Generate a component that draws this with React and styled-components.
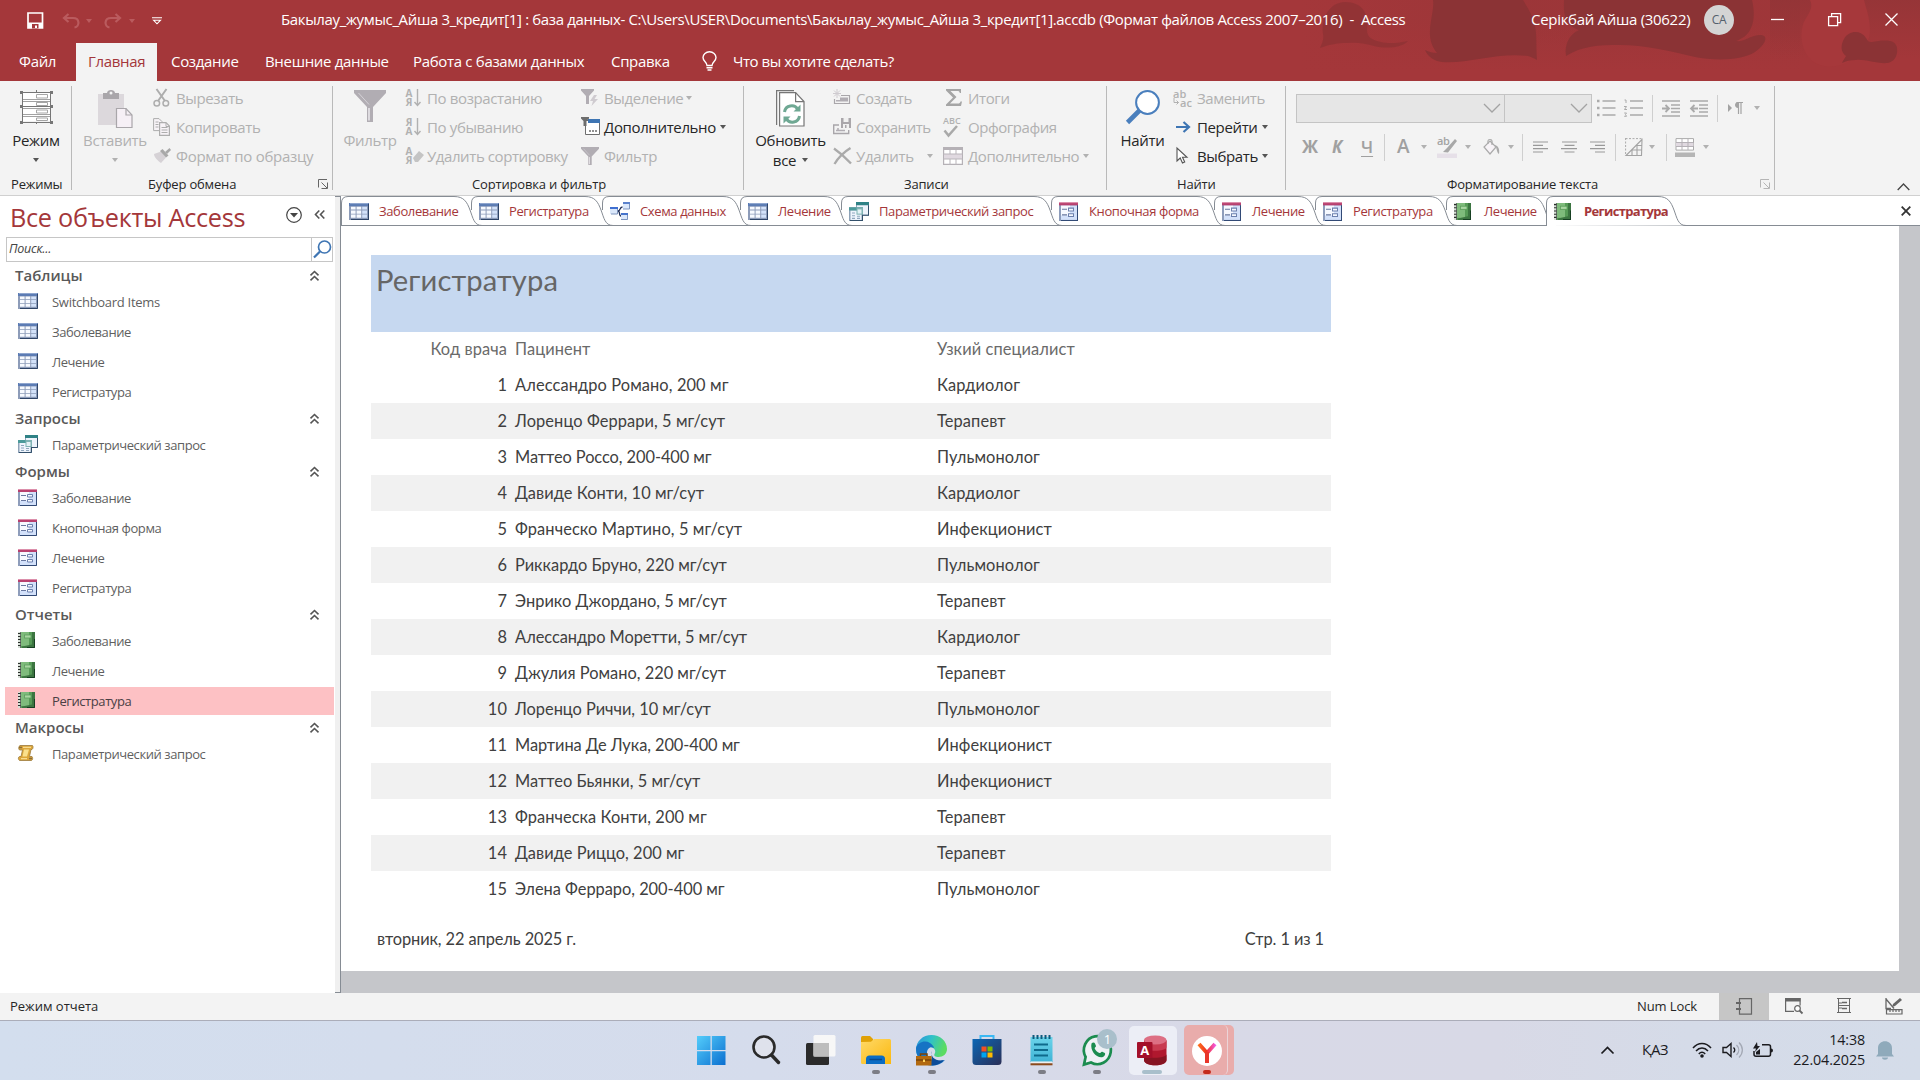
import React from "react";
import styled, { createGlobalStyle, css } from "styled-components";

const UI = `"Open Sans", "Noto Sans", sans-serif`;
const REPORT = `Lato, "Open Sans", sans-serif`;
const RED = "#a4373a";
const OFF = "#b1b1b1";
const INK = "#262626";

const Global = createGlobalStyle`
  * { box-sizing: border-box; }
  body { margin: 0; overflow: hidden; background: #fff; }
  svg { display: block; flex: none; overflow: visible; }
`;

const Window = styled.div`
  width: 1920px;
  height: 1080px;
  display: flex;
  flex-direction: column;
  font-family: ${UI};
  font-size: 15px;
  line-height: 20px;
  color: ${INK};
  white-space: nowrap;
`;
const Space = styled.div`
  width: ${(p) => p.$w}px;
  flex: none;
`;

/* ---------- title bar ---------- */
const Header = styled.header`
  position: relative;
  height: 81px;
  flex: none;
  background: ${RED};
  color: #fff;
  display: flex;
  flex-direction: column;
`;
const Art = styled.svg`
  position: absolute;
  right: 0;
  top: 0;
`;
const TitleBar = styled.div`
  position: relative;
  height: 43px;
  display: flex;
  align-items: center;
  padding-bottom: 4px;
`;
const QuickAccess = styled.div`
  width: 281px;
  display: flex;
  align-items: center;
  padding: 2px 0 0 27px;
`;
const Title = styled.div`
  width: 1250px;
  padding-bottom: 2px;
  letter-spacing: -0.356px;
`;
const User = styled.div`
  width: 173px;
  padding-bottom: 1px;
  letter-spacing: -0.3px;
`;
const Avatar = styled.div`
  width: 30px;
  height: 30px;
  border-radius: 50%;
  background: #d4d4d4;
  color: #54606c;
  font-size: 12px;
  line-height: 30px;
  text-align: center;
  letter-spacing: -0.3px;
`;
const Controls = styled.div`
  display: flex;
  align-items: center;
  gap: 44px;
  padding-left: 37px;
`;
const MenuTabs = styled.nav`
  position: relative;
  height: 38px;
  display: flex;
  align-items: stretch;
`;
const MenuTab = styled.div`
  width: ${(p) => p.$w}px;
  padding-left: ${(p) => p.$pad}px;
  padding-bottom: 2px;
  display: flex;
  align-items: center;
  letter-spacing: ${(p) => p.$ls ?? -0.32}px;
  ${(p) => p.$active && css`background: #f3f3f3; color: ${RED};`}
`;
const Tell = styled(MenuTab)`
  gap: 16px;
`;

/* ---------- ribbon ---------- */
const Ribbon = styled.section`
  height: 115px;
  flex: none;
  background: #f3f3f3;
  border-bottom: 1px solid #d0d0d0;
  display: flex;
  padding-top: 5px;
`;
const Group = styled.div`
  width: ${(p) => p.$w}px;
  height: 104px;
  border-right: 1px solid #b9b9b9;
  display: flex;
  flex-direction: column;
`;
const GroupBody = styled.div`
  height: 88px;
  flex: none;
  display: flex;
  padding-left: ${(p) => p.$pad}px;
`;
const GroupFoot = styled.div`
  display: flex;
  align-items: center;
  height: 20px;
  flex: none;
  padding-left: ${(p) => p.$pad}px;
  font-size: 13px;
  line-height: 16px;
  letter-spacing: -0.17px;
`;
const Launcher = styled.div`
  margin-left: auto;
  padding: 0 4px 1px 0;
`;
const Big = styled.div`
  width: ${(p) => p.$w}px;
  display: flex;
  flex-direction: column;
  align-items: center;
  color: ${(p) => (p.$off ? OFF : INK)};
  letter-spacing: -0.32px;
  padding-top: 4px;
`;
const BigIcon = styled.div`
  height: 40px;
`;
const BigLine = styled.div`
  height: 20px;
  display: flex;
  align-items: center;
  gap: 6px;
`;
const Column = styled.div`
  width: ${(p) => p.$w}px;
  margin-left: ${(p) => p.$ml || 0}px;
  margin-top: -3px;
  display: flex;
  flex-direction: column;
`;
const Cmd = styled.div`
  height: 29px;
  display: flex;
  align-items: center;
  color: ${(p) => (p.$off ? OFF : INK)};
  letter-spacing: ${(p) => p.$ls ?? -0.37}px;
`;
const CmdIcon = styled.div`
  width: ${(p) => p.$w || 23}px;
  height: 20px;
  display: flex;
  align-items: center;
`;
const Inset = styled.div`
  padding-left: 3px;
`;
const Caret = styled.i`
  border: 3.5px solid transparent;
  border-top: 4px solid ${(p) => p.$c || (p.$off ? OFF : "#555")};
  border-bottom: 0;
  margin-left: ${(p) => p.$ml ?? 4}px;
`;
const FormatArea = styled.div`
  padding-left: 10px;
  display: flex;
  flex-direction: column;
`;
const FormatRow = styled.div`
  display: flex;
  align-items: center;
  height: ${(p) => p.$h}px;
`;
const Combo = styled.div`
  width: ${(p) => p.$w}px;
  height: 29px;
  background: #e6e6e6;
  border: 1px solid #c4c4c4;
  margin-right: -1px;
  display: flex;
  align-items: center;
  justify-content: flex-end;
  padding-right: 3px;
`;
const Slot = styled.div`
  width: ${(p) => p.$w}px;
  display: flex;
  align-items: center;
`;
const Rule = styled.div`
  width: 1px;
  height: 27px;
  background: #cfcfcf;
  margin-right: ${(p) => p.$mr}px;
`;
const Glyph = styled.span`
  font-size: ${(p) => p.$s || 17}px;
  font-weight: ${(p) => (p.$light ? 600 : 700)};
  font-style: ${(p) => (p.$italic ? "italic" : "normal")};
  text-decoration: ${(p) => (p.$line ? "underline" : "none")};
  text-underline-offset: 3px;
  padding-bottom: ${(p) => p.$up || 0}px;
  color: #a0a0a0;
`;
const Collapse = styled.div`
  flex: 1;
  display: flex;
  align-items: flex-end;
  justify-content: flex-end;
  padding: 0 10px 4px 0;
`;
const SortLetters = styled.span`
  display: flex;
  flex-direction: column;
  width: 8px;
  font-size: 10px;
  line-height: 9px;
  font-weight: 700;
  letter-spacing: 0;
  text-align: center;
  color: #b1b1b1;
`;
const Stack = styled.div`
  display: flex;
  flex-direction: column;
`;
const Tiny = styled.span`
  font-size: ${(p) => p.$s || 9}px;
  line-height: 9px;
  font-weight: 600;
  letter-spacing: 0;
  color: #b1b1b1;
  width: 20px;
  text-align: ${(p) => (p.$end ? "right" : "left")};
`;

/* ---------- workspace ---------- */
const Workspace = styled.main`
  height: 797px;
  flex: none;
  display: flex;
`;
const NavPane = styled.aside`
  width: 335px;
  background: #fff;
  color: #5f5f5f;
  display: flex;
  flex-direction: column;
`;
const NavTitle = styled.div`
  height: 41px;
  display: flex;
  align-items: center;
  padding: 1px 0 0 10px;
  font-size: 25.3px;
  letter-spacing: -0.3px;
  color: ${RED};
`;
const NavButtons = styled.div`
  display: flex;
  gap: 12px;
  align-items: center;
  margin-left: auto;
  padding-right: 10px;
  margin-top: -5px;
`;
const Search = styled.div`
  width: 327px;
  height: 25px;
  margin: 0 0 2px 6px;
  border: 1px solid #c6c6c6;
  display: flex;
  font-size: 12.5px;
  line-height: 22px;
  font-style: italic;
  letter-spacing: -0.2px;
  padding-left: 2px;
  color: #444;
`;
const SearchButton = styled.div`
  width: 21px;
  margin-left: auto;
  border-left: 1px solid #c6c6c6;
  padding: 2px 0 0 1px;
`;
const NavHead = styled.div`
  height: 23px;
  padding: 0 15px 1px 15px;
  display: flex;
  align-items: center;
  justify-content: space-between;
  font-weight: 600;
  font-size: 15px;
  color: #595959;
`;
const NavItem = styled.div`
  height: 28px;
  margin: 1px 1px 1px 5px;
  padding: 0 0 1px 13px;
  display: flex;
  align-items: center;
  font-size: 13px;
  line-height: 18px;
  letter-spacing: ${(p) => p.$ls ?? -0.42}px;
  ${(p) => p.$active && css`background: #fdc1c4; color: #4a4044;`}
`;
const NavIcon = styled.div`
  width: 34px;
  padding-bottom: 1px;
`;
const Splitter = styled.div`
  width: 6px;
  background: #f0f0f0;
  border-right: 1px solid #868c94;
  border-top: 1px solid #868c94;
  border-bottom: 1px solid #868c94;
`;
const Content = styled.div`
  flex: 1;
  display: flex;
  flex-direction: column;
`;
const TabStrip = styled.div`
  height: 30px;
  flex: none;
  display: flex;
  border-bottom: 1px solid #868c94;
`;
const DocTab = styled.div`
  position: relative;
  width: ${(p) => p.$w}px;
  height: 30px;
  padding-left: 8px;
  display: flex;
  align-items: center;
  color: ${RED};
  font-size: 13px;
  line-height: 18px;
  font-weight: ${(p) => (p.$active ? 700 : 400)};
  letter-spacing: ${(p) => (p.$active ? -0.68 : -0.38)}px;
`;
const TabShape = styled.svg`
  position: absolute;
  left: 0;
  top: 0;
`;
const TabIcon = styled.div`
  position: relative;
  width: 30px;
`;
const TabText = styled.span`
  position: relative;
  padding-bottom: 1px;
`;
const CloseDoc = styled.div`
  margin-left: auto;
  padding: 10px 9px 0 0;
`;
const Canvas = styled.div`
  flex: 1;
  background: #c5c6ca;
  padding: 0 21px 22px 0;
`;
const Page = styled.article`
  height: 745px;
  background: #fff;
  padding: 29px 0 0 30px;
  font-family: ${REPORT};
  font-size: 16.4px;
  letter-spacing: 0.1px;
  color: #404040;
`;
const Band = styled.div`
  width: 960px;
  height: 77px;
  background: #c6d8f0;
  color: #666;
  padding: 7px 0 0 5px;
  font-size: 29.2px;
  line-height: 36px;
`;
const Row = styled.div`
  width: 960px;
  height: 36px;
  padding-bottom: 1px;
  display: grid;
  grid-template-columns: 136px 430px 1fr;
  align-items: center;
  background: ${(p) => (p.$alt ? "#f1f1f1" : "#fff")};
`;
const Num = styled.span`
  text-align: right;
`;
const Name = styled.span`
  padding-left: 8px;
  letter-spacing: ${(p) => p.$ls ?? 0.1}px;
`;
const HeadRow = styled(Row)`
  height: 35px;
  color: #6a6a6a;
  padding-bottom: 2px;
`;
const Foot = styled.footer`
  width: 960px;
  height: 64px;
  padding: 0 7px 0 6px;
  display: flex;
  justify-content: space-between;
  align-items: center;
  letter-spacing: ${(p) => p.$ls}px;
`;

/* ---------- status + taskbar ---------- */
const Status = styled.div`
  height: 28px;
  flex: none;
  background: #f3f3f3;
  border-bottom: 1px solid #abadb9;
  display: flex;
  align-items: center;
  padding: 0 1px 0 10px;
  font-size: 13px;
  line-height: 18px;
`;
const StatusText = styled.div`
  padding-bottom: 1px;
`;
const NumLock = styled(StatusText)`
  margin-left: auto;
  width: 82px;
  letter-spacing: -0.1px;
`;
const ViewButton = styled.div`
  width: 50px;
  height: 27px;
  padding-bottom: 1px;
  display: flex;
  align-items: center;
  justify-content: center;
  background: ${(p) => (p.$active ? "#c6c6c6" : "transparent")};
`;
const Taskbar = styled.div`
  height: 59px;
  flex: none;
  background: linear-gradient(90deg, #d3deee 0%, #d5dcec 40%, #d8d9e7 62%, #d8d9e6 78%, #d5dbe8 88%, #d4dce9 100%);
  display: flex;
`;
const Apps = styled.div`
  width: 1600px;
  padding-left: 683.5px;
  display: flex;
  flex: none;
`;
const AppButton = styled.div`
  position: relative;
  width: 55.15px;
  height: 59px;
  display: flex;
  justify-content: center;
  padding-top: 13px;
`;
const Dot = styled.i`
  position: absolute;
  left: 50%;
  top: 49px;
  width: ${(p) => p.$w || 8}px;
  height: 4px;
  margin-left: ${(p) => -(p.$w || 8) / 2}px;
  border-radius: 2px;
  background: ${(p) => p.$c || "#7c7d85"};
`;
const Tile = styled.i`
  position: absolute;
  left: ${(p) => p.$x}px;
  top: ${(p) => p.$y}px;
  width: ${(p) => p.$w}px;
  height: ${(p) => p.$h}px;
  border-radius: 5px;
  background: ${(p) => p.$c};
  ${(p) => p.$edge && css`border-right: 1px solid #ebd4d8;`}
`;
const Lift = styled.div`
  position: relative;
`;
const Badge = styled.span`
  position: absolute;
  left: 28px;
  top: 8px;
  width: 20px;
  height: 20px;
  border-radius: 50%;
  background: #a9bfcb;
  color: #fff;
  font-size: 13px;
  line-height: 20px;
  text-align: center;
`;
const Tray = styled.div`
  display: flex;
  align-items: center;
  flex: 1;
  color: #1b1b1f;
  padding-bottom: 1px;
`;
const Lang = styled.div`
  width: 50px;
  margin-left: 27px;
  letter-spacing: -0.4px;
  font-size: 14.5px;
`;
const Clock = styled.div`
  width: 92px;
  text-align: right;
  font-size: 14.3px;
  letter-spacing: -0.12px;
  padding-bottom: 1px;
`;

/* ---------- icons ---------- */
const Svg = ({ w, h, children, ...r }) => (
  <svg width={w} height={h} viewBox={`0 0 ${w} ${h}`} fill="none" {...r}>{children}</svg>
);

const TableIcon = ({ h = 16 }) => (
  <svg width="20" height={h} viewBox="0 0 20 16" preserveAspectRatio="none">
    <rect width="20" height="16" fill="#8d9cb9" />
    <rect width="20" height="3" fill="#5c7cb4" />
    <rect x="1" y="0" width="18" height="1" fill="#8fa6cf" />
    <path d="M2 3.6h4.6v2.6H2zM7.6 3.6h4.6v2.6H7.6zM2 7h4.6v3H2zM7.6 7h4.6v3H7.6zM2 10.8h4.6v3H2zM7.6 10.8h4.6v3H7.6z" fill="#f7faff" />
    <path d="M13.2 3.6h4.8v2.6h-4.8zM13.2 7h4.8v3h-4.8zM13.2 10.8h4.8v3h-4.8z" fill="#d3e2fa" />
    <path d="M19.5 1v14.500H2" stroke="#2f4568" fill="none" />
  </svg>
);
const FormIcon = ({ h = 17 }) => (
  <svg width="19" height={h} viewBox="0 0 19 17" preserveAspectRatio="none">
    <rect width="19" height="17" fill="#8e9dbb" />
    <rect x="2" y="3" width="16" height="13" fill="#d3e1fa" />
    <rect x="2" y="3" width="9" height="9" fill="#f6f9ff" />
    <rect width="19" height="3" fill="#b8406f" />
    <rect width="19" height="1" fill="#dc8fab" />
    <path d="M3 6.500h5M3 11.500h5" stroke="#6878a0" />
    <path d="M9.500 5.500h5v2.500h-5zM9.500 10.500h5v2.500h-5z" stroke="#6c80ad" fill="#f4f8ff" />
    <path d="M18.500 3v13.500H2" stroke="#324a76" fill="none" />
  </svg>
);
const ReportIcon = ({ h = 16 }) => (
  <svg width="17" height={h} viewBox="0 0 17 16" preserveAspectRatio="none">
    <rect width="17" height="16" fill="#569b57" />
    <rect x="3" width="8" height="14" fill="#7fbb7c" />
    <path d="M14 0h3v16H4v-1.500l10-2z" fill="#3c7541" />
    <path d="M16.500 7v8.500H9" fill="none" stroke="#173f22" />
    <rect x="6.500" y="3" width="6.500" height="3" fill="#a9d6a2" stroke="#5d9d5c" strokeWidth=".8" />
    <rect width="3" height="16" fill="#d8e0d8" />
    <path d="M0 1.500h3M0 4.500h3M0 7.500h3M0 10.500h3M0 13.500h3" stroke="#2b2f2c" />
    <path d="M2.500 0v16" stroke="#4a564c" strokeWidth=".8" />
  </svg>
);
const QueryIcon = ({ h = 18 }) => (
  <svg width="20" height={h} viewBox="0 0 20 18" preserveAspectRatio="none">
    <rect x="7" width="13" height="13" fill="#8fa3b8" />
    <rect x="8" y="3" width="11" height="9" fill="#eef4fc" />
    <rect x="7" width="13" height="3" fill="#2f8286" />
    <path d="M19.500 3v9.500H9" stroke="#33506b" fill="none" />
    <rect y="5" width="14" height="13" fill="#8fa3b8" />
    <rect x="1.500" y="8" width="11" height="9" fill="#eef4fc" />
    <rect y="5" width="14" height="3" fill="#4b9a9a" />
    <rect x="7.500" y="5" width="6.500" height="7" fill="#7fb3b4" />
    <rect x="8.500" y="7" width="4" height="4" fill="#e4f2f5" />
    <path d="M3 10.500h3M3 13h3M3 15.500h3M8 13.500h3M8 15.500h3" stroke="#8fa6bd" />
    <path d="M13.500 12v5.500H1" stroke="#33506b" fill="none" />
  </svg>
);
const RelationIcon = () => (
  <Svg w={20} h={18}>
    <rect x="0" y="5" width="8" height="7" fill="#dbe8fb" />
    <rect x="0" y="5" width="8" height="2" fill="#3f6fd1" />
    <rect x="13" y="0" width="7" height="7" fill="#dbe8fb" />
    <rect x="13" y="0" width="7" height="2" fill="#5b82cc" />
    <rect x="11" y="11" width="7" height="7" fill="#dbe8fb" />
    <rect x="11" y="11" width="7" height="2" fill="#4674cc" />
    <path d="M19.500 2v5H13M17.500 13v4.500H11M7.500 7v5H1" stroke="#7d94bd" />
    <path d="M8 9c3 0 1-4 4.500-4M8 9c2.500 0 .5 5 3 5" stroke="#1d2b52" strokeWidth="1.3" />
  </Svg>
);
const MacroIcon = () => (
  <Svg w={16} h={16}>
    <path d="M2 .5h12.500c1 1 .5 3.500-.5 4h-1L11.500 11.500H14c1 1 .8 3.500-.5 4H1.500C0 14.500 0 12 1.500 11.500H3l1.500-6.500H1.500C.3 4 .5 1.200 2 .5z" fill="#dca63a" stroke="#9a7a3c" strokeWidth=".8" />
    <path d="M6 4.500h5L9 11.500H4.500z" fill="#fae08c" />
    <path d="M1 2.500h3M11 13.500h3" stroke="#8a6d38" strokeWidth="1.5" />
    <path d="M5 2.300h8M3 13.600h6" stroke="#f8dc90" strokeWidth="1.2" />
  </Svg>
);
const tabIcons = { table: <TableIcon h={17} />, form: <FormIcon h={19} />, report: <ReportIcon h={17} />, query: <QueryIcon h={19} />, rel: <RelationIcon /> };
const navIcons = { table: <TableIcon />, form: <FormIcon />, report: <ReportIcon />, query: <QueryIcon />, macro: <MacroIcon /> };

const DoubleChevron = ({ left }) => (
  <Svg w={11} h={11}>
    <path
      d="M1.500 5.300 5.500 1.500l4 3.800M1.500 10.300l4-3.800 4 3.800"
      stroke="#555"
      strokeWidth="1.6"
      transform={left ? "rotate(-90 5.5 5.5)" : undefined}
    />
  </Svg>
);
const Funnel = ({ s = 32 }) => (
  <svg width={s} height={s} viewBox="0 0 32 32">
    <path d="M0 0h32v3L19 17v15h-6V17L0 3z" fill="#b1adb3" />
    <path d="M15 18v12.500" stroke="#e9e6ea" strokeWidth="1.6" fill="none" />
    <path d="M4.500 3 15 14.500" stroke="#d5d2d7" strokeWidth="1" fill="none" />
  </svg>
);
const SortIcon = ({ a, b }) => (
  <>
    <SortLetters><span>{a}</span><span>{b}</span></SortLetters>
    <Svg w={8} h={18}><path d="M4.500 0v16.500M1.500 13l3 3.500 3-3.500" stroke="#b1b1b1" strokeWidth="1.4" /></Svg>
  </>
);

const Icons = {
  save: <Svg w={17} h={17}><path d="M1 1h14.500v15H1z" stroke="#fff" strokeWidth="1.7" /><path d="M1 10.500h15V16H1z" fill="#fff" /><path d="M5 12h6.500v4.500H5z" fill={RED} /><path d="M8 13.500h2v2.500H8z" fill="#fff" /></Svg>,
  undo: <Svg w={18} h={16}><path d="M6.500 1 2 5l4.500 4M2 5h9c7 0 7 8.500 1.500 9.500" stroke="#ba5b5e" strokeWidth="2.2" /></Svg>,
  redo: <Svg w={18} h={16}><path d="M11.500 1 16 5l-4.500 4M16 5H7c-7 0-7 8.500-1.500 9.500" stroke="#ba5b5e" strokeWidth="2.2" /></Svg>,
  custom: <Svg w={10} h={8}><path d="M0 .7h10M1.500 3.200l3.500 3.600 3.500-3.600z" stroke="#fff" strokeWidth="1.1" /></Svg>,
  bulb: <Svg w={15} h={20}><path d="M5 14.500C5 11 1 10.500 1 6.500a6.500 5.800 0 0 1 13 0c0 4-4 4.500-4 8z" stroke="#fff" strokeWidth="1.4" /><path d="M4.500 16.700h6M5.500 19h4" stroke="#fff" strokeWidth="1.4" /></Svg>,
  mode: (
    <Svg w={33} h={34}>
      <path d="M3 3h27v28H3z" fill="#fff" />
      <path d="M1 2.500h31M1 16.500h31M1 32.500h31M2.500 1v33M30.500 1v33M16.500 0v2M16.500 32v2" stroke="#767676" />
      <path d="M3 9.500h27M3 11.500h27M3 18.500h27M3 24.500h27M3 26.500h27" stroke="#8a8a8a" strokeWidth=".8" />
      <path d="M16.500 4.500h11v3.500h-11zM16.500 12.500h11v3h-11zM16.500 20h11v3h-11zM16.500 28h11v2.500h-11z" stroke="#a5a5a5" fill="#fff" />
      <path d="M0 1h3v3H0zM30 1h3v3h-3zM0 15h2v3H0zM31 15h2v3h-2zM0 31h3v3H0zM30 31h3v3h-3z" fill="#767676" />
    </Svg>
  ),
  paste: <Svg w={36} h={38}><path d="M1 4h26v31H1z" fill="#dcd8dc" /><path d="M6 3h4c0-4 8-4 8 0h4v6H6z" fill="#a9a6aa" /><circle cx="14" cy="3" r="1.5" fill="#f3f3f3" /><path d="M19.500 18.500H29l6 6.500v12.500H19.500z" fill="#f6f0f6" stroke="#a9a6aa" strokeWidth="1.2" /><path d="M29 18.500V25h6" stroke="#a9a6aa" strokeWidth="1.2" /></Svg>,
  cut: <Svg w={17} h={18}><path d="M3.500 0 12 12M13.500 0 5 12" stroke="#adadad" strokeWidth="2" /><circle cx="3.800" cy="14.300" r="2.800" stroke="#adadad" strokeWidth="1.5" /><circle cx="12.800" cy="14.300" r="2.800" stroke="#adadad" strokeWidth="1.5" /></Svg>,
  copy: <Svg w={17} h={18}><path d="M.6.6H6l3 3v9H.6z" fill="#f7f3f7" stroke="#adadad" /><path d="M6.600 4.600H13l3.400 3.500v9.300H6.600z" fill="#f7f3f7" stroke="#adadad" strokeWidth="1.2" /><path d="M2.500 4h3M2.500 6.500h3M2.500 9h3M8.500 9.500h6M8.500 12h6M8.500 14.500h6M13 5v3.500h3" stroke="#adadad" /></Svg>,
  brush: <Svg w={18} h={16}><path d="m1 6 7-2.500 5 6L8 15C5 13 1 9 1 6z" fill="#d6d2d6" /><path d="m7 3 2.500-2 6 6.500-2.500 2z" fill="#a8a8a8" /><path d="m12 4 4.500-4L18 2l-4 4z" fill="#a8a8a8" /></Svg>,
  eraser: <Svg w={11} h={12}><path d="m0 8 6-7 5 4-6 7H2z" fill="#c4c4c4" /></Svg>,
  selFilter: <Svg w={18} h={18}><path d="M0 0h13v1.500L8 7v8H5V7L0 1.500z" fill="#b1adb3" /><path d="m13 6-4 6h3l-1.500 5L17 10h-3.500L16 6z" fill="#cfcbd0" /></Svg>,
  moreFilter: <Svg w={20} h={19}><path d="M4.500 3.500h14v14h-14z" fill="#fff" stroke="#6d6d6d" /><path d="M7 2h12v4H7z" fill="#3e75b3" /><path d="M0 0h8v1.500L5.500 4v5h-3V4L0 1.500z" fill="#6d6d6d" /><path d="M8 14h2M11 14h2M14 14h2" stroke="#6d6d6d" strokeWidth="1.5" /></Svg>,
  refresh: <Svg w={29} h={37}><path d="M.6 35V.6H18" stroke="#767676" strokeWidth="1.2" /><path d="M3.600 2.600h16l8.400 9V36H3.600z" fill="#fff" stroke="#767676" strokeWidth="1.2" /><path d="M19.600 2.600v9H28" stroke="#767676" strokeWidth="1.2" /><path d="M8.500 22c1-7 10-8 13-3M23.500 26c-1 7-10 8-13 3" stroke="#6fa893" strokeWidth="3" /><path d="M24.500 14.500v7h-7zM7.500 33.500v-7h7z" fill="#6fa893" /></Svg>,
  create: <Svg w={18} h={17}><path d="M4 0v9M0 4.500h8M1 1.500l6 6M7 1.500l-6 6" stroke="#cfcbd0" /><path d="M1.500 10v4.500h15v-8H8" stroke="#a9a6aa" strokeWidth="1.2" /><path d="M7 8.500h8v4H3V11h4z" fill="#b1adb3" /></Svg>,
  keep: <Svg w={18} h={18}><path d="M8 0h10v10H8z" fill="#a9a6aa" /><path d="M10.500 0h5v4h-5zM10 6h6v4h-6z" fill="#f0f0f0" /><path d="M12 7h1.500v3H12z" fill="#a9a6aa" /><path d="M6 7H.7v8.500h15V12" stroke="#a9a6aa" strokeWidth="1.4" /><path d="M3 12.500h9M5 10v2" stroke="#b1adb3" strokeWidth="1.5" /></Svg>,
  del: <Svg w={19} h={18}><path d="M1 1.500C6 5 12 10 18 16.500M17.500 1C11 5 5 11 1.500 17" stroke="#aaa" strokeWidth="2.3" /></Svg>,
  sum: <Svg w={16} h={17}><path d="M0 0h15v4h-1.200c-.3-1.500-1-2-2.300-2H4.500l6 6-6.500 6.500h8c1.500 0 2-.5 2.500-2H16L15 17H0v-1.500L7 8.500 0 1.500z" fill="#a5a5a5" /></Svg>,
  check: <Svg w={16} h={12}><path d="m1.500 5.500 4 5L14 1" stroke="#a9a9a9" strokeWidth="2.5" /></Svg>,
  moreRec: <Svg w={20} h={18}><path d="M.6.6h18.800v16.800H.6z" fill="#fff" stroke="#b5b1b6" strokeWidth="1.2" /><path d="M0 0h20v3H0z" fill="#b5b1b6" /><path d="M1 7h18v5H1z" fill="#e0d9e0" /><path d="M7 3v4M13 3v4M7 12v6M13 12v6M0 7h20M0 12h20" stroke="#b9b5ba" /></Svg>,
  hook: <Svg w={7} h={8}><path d="M1 0v4.500h4.500M3.500 2.500l2 2-2 2" stroke="#b1b1b1" /></Svg>,
  find: <Svg w={34} h={34}><circle cx="21.500" cy="12.500" r="11.400" fill="#fff" stroke="#4a7fbd" strokeWidth="2" /><path d="M13.500 20.500 1.500 32.500" stroke="#4a7fbd" strokeWidth="4.6" /></Svg>,
  go: <Svg w={15} h={12}><path d="M0 6h12M7.500 1l5.500 5-5.500 5" stroke="#3e75b3" strokeWidth="2.2" /></Svg>,
  pointer: <Svg w={12} h={17}><path d="M1 1v13l3.200-3 2.300 5 2.200-1-2.200-4.700H11z" fill="#fff" stroke="#555" strokeWidth="1.1" /></Svg>,
  launch: (c) => <Svg w={10} h={10}><path d="M.5 8.500V.5h8.500M9.500 3.500v6H3.500M3.500 3.500l5.500 5.500" stroke={c} /></Svg>,
  comboArrow: <Svg w={18} h={10}><path d="m1 1 8 8 8-8" stroke="#a3a3a3" strokeWidth="1.3" /></Svg>,
  bullets: <Svg w={18} h={18}><path d="M5.500 2h13M5.500 9h13M5.500 16h13" stroke="#aaa" strokeWidth="1.3" /><path d="M0 .8h2.500v2.500H0zM0 7.800h2.500v2.500H0zM0 14.800h2.500v2.500H0z" fill="#aaa" /></Svg>,
  numbers: <Svg w={19} h={18}><path d="M6 2h13M6 9h13M6 16h13" stroke="#aaa" strokeWidth="1.3" /><path d="M.5 1h1.500v3M0 7.500h2.500L.5 10.500h2.500M.2 14h2.300l-1 1.500 1 1.800H.2" stroke="#aaa" /></Svg>,
  indent: <Svg w={19} h={17}><path d="M0 1h18M9 5h9M9 8.500h9M9 12h9M0 16h18" stroke="#aaa" strokeWidth="1.3" /><path d="M0 8.500h6M3.500 5l3.500 3.500L3.500 12" stroke="#aaa" strokeWidth="1.8" /></Svg>,
  outdent: <Svg w={19} h={17}><path d="M0 1h18M9 5h9M9 8.500h9M9 12h9M0 16h18" stroke="#aaa" strokeWidth="1.3" /><path d="M8 8.500H1.500M4.500 5 1 8.500 4.500 12" stroke="#aaa" strokeWidth="1.8" /></Svg>,
  para: <Svg w={15} h={12}><path d="m0 2 4 4-4 4zM10 0v6c-4 0-4-6 0-6z" fill="#a3a3a3" /><path d="M10.500 0v12M13 0v12M8.500.5H15" stroke="#a3a3a3" strokeWidth="1.2" /></Svg>,
  marker: (
    <Svg w={20} h={22}>
      <text x="0" y="9" fontFamily={UI} fontSize="11" fontWeight="600" letterSpacing="-.3" fill="#a3a3a3">ab</text>
      <path d="m18 3-8 9-4 4 5 .5L20 5z" fill="#a8a8a8" />
      <path d="M0 17.500h20V22H0z" fill="#e6e0e8" />
    </Svg>
  ),
  bucket: <Svg w={17} h={17}><path d="m7 2 6 6-6 7-6-7z" fill="#f7f3f7" stroke="#aaa" strokeWidth="1.2" /><path d="M5 5V2c0-2 4-2 4 0v4" stroke="#aaa" strokeWidth="1.2" /><path d="M11 6c4 0 6 4 5 9-2-1-2-4-3-7z" fill="#aaa" /></Svg>,
  left: <Svg w={15} h={12}><path d="M0 1h15M0 4.300h10M0 7.600h15M0 11h10" stroke="#999" strokeWidth="1.2" /></Svg>,
  center: <Svg w={17} h={12}><path d="M1 1h15M3.500 4.300h10M0 7.600h16M3.500 11h10" stroke="#999" strokeWidth="1.2" /></Svg>,
  right: <Svg w={15} h={12}><path d="M0 1h15M5 4.300h10M0 7.600h15M5 11h10" stroke="#999" strokeWidth="1.2" /></Svg>,
  gridlines: <Svg w={17} h={18}><path d="M.5.6H17M.6 0v17" stroke="#aaa" strokeDasharray="2 1.500" /><path d="M17 1.500 1 17.500h15.500zM12 6v11.500M7 11v6.500M7 12h10M12 7.500h5" stroke="#a3a3a3" strokeWidth="1.1" /></Svg>,
  altRow: <Svg w={20} h={19}><path d="M1 .6h17.500v11.500H1z" fill="#fff" stroke="#aaa" /><path d="M1 5h17.500v3H1z" fill="#e0d9e0" /><path d="M7 1v11M13 1v11M1 4.500h17.500M1 8.500h17.500" stroke="#b5b1b6" /><path d="M0 14.500h20V19H0z" fill="#b5b5b5" /></Svg>,
};

/* ---------- data ---------- */
const docTabs = [
  ["table", "Заболевание", 130],
  ["table", "Регистратура", 131],
  ["rel", "Схема данных", 138],
  ["table", "Лечение", 101],
  ["query", "Параметрический запрос", 210],
  ["form", "Кнопочная форма", 163],
  ["form", "Лечение", 101],
  ["form", "Регистратура", 131],
  ["report", "Лечение", 100],
  ["report", "Регистратура", 129],
];
const nav = [
  ["Таблицы", "table", ["Switchboard Items", "Заболевание", "Лечение", "Регистратура"]],
  ["Запросы", "query", ["Параметрический запрос"]],
  ["Формы", "form", ["Заболевание", "Кнопочная форма", "Лечение", "Регистратура"]],
  ["Отчеты", "report", ["Заболевание", "Лечение", "Регистратура"]],
  ["Макросы", "macro", ["Параметрический запрос"]],
];
/* patient, specialist, tracking of the patient column */
const rows = [
  ["Алессандро Романо, 200 мг", "Кардиолог", 0.1],
  ["Лоренцо Феррари, 5 мг/сут", "Терапевт", 0.08],
  ["Маттео Россо, 200-400 мг", "Пульмонолог", -0.07],
  ["Давиде Конти, 10 мг/сут", "Кардиолог", 0.05],
  ["Франческо Мартино, 5 мг/сут", "Инфекционист", 0.1],
  ["Риккардо Бруно, 220 мг/сут", "Пульмонолог", 0],
  ["Энрико Джордано, 5 мг/сут", "Терапевт", 0.03],
  ["Алессандро Моретти, 5 мг/сут", "Кардиолог", -0.05],
  ["Джулия Романо, 220 мг/сут", "Терапевт", 0],
  ["Лоренцо Риччи, 10 мг/сут", "Пульмонолог", -0.03],
  ["Мартина Де Лука, 200-400 мг", "Инфекционист", -0.08],
  ["Маттео Бьянки, 5 мг/сут", "Инфекционист", 0.03],
  ["Франческа Конти, 200 мг", "Терапевт", 0.05],
  ["Давиде Риццо, 200 мг", "Терапевт", 0.05],
  ["Элена Ферраро, 200-400 мг", "Пульмонолог", -0.02],
];

const tabPath = (w, full) =>
  `${full ? "M.5 30V7" : "M.5 14V7"}Q.5 .5 7 .5H${w - 17}C${w - 7} .5 ${w - 4} 6 ${w - 1} 14S${w + 3} 29.500 ${w + 11} 29.500`;

const Command = ({ icon, iw, text, off, caret, gap, ls }) => (
  <Cmd $off={off} $ls={ls}>
    <CmdIcon $w={iw}>{icon}</CmdIcon>
    {text}
    {caret && <Caret $off={off} $ml={gap} />}
  </Cmd>
);

/* ---------- sections ---------- */
const TopArt = () => (
  <Art width="620" height="81" viewBox="1300 0 620 81">
    <defs>
      <linearGradient id="shade" x1="0" x2="1"><stop offset="0" stopColor="#8b3335" stopOpacity="0" /><stop offset=".45" stopColor="#8b3335" stopOpacity=".32" /><stop offset="1" stopColor="#8b3335" stopOpacity=".2" /></linearGradient>
      <linearGradient id="down" x1="0" x2="0" y1="0" y2="1"><stop offset=".3" stopColor={RED} stopOpacity="0" /><stop offset="1" stopColor={RED} /></linearGradient>
      <linearGradient id="fade" x1="0" x2="0" y1="0" y2="1"><stop offset="0" stopColor="#8b3335" stopOpacity=".55" /><stop offset="1" stopColor="#8b3335" stopOpacity="0" /></linearGradient>
    </defs>
    <rect x="1300" width="500" height="70" fill="url(#shade)" />
    <rect x="1300" width="500" height="71" fill="url(#down)" />
    <rect x="1770" width="150" height="60" fill="url(#fade)" />
    <path d="M1810 0c4 8-2 14-6 22-6 14-2 40 20 44s46-14 46-36c0-12-4-22-6-30z" fill="#a6383b" />
    <path d="M1320 48c2-5 4-8 3-14-2-18 8-32 22-32 18 0 24 12 22 28 0 8 6 10 14 12 8 2 18 1 27-1-6 7-22 8-34 5-8-2-16-4-26-3-12 0-20 2-28 5z" fill="#8f3335" opacity=".85" />
    <path d="M1433 0h90c6 10 10 16 12 26 2 10 1 20 2 34-3-2-6-3-9-4-30-4-60 8-86 6-8-1-14-5-17-12 4 2 8 3 12 3-8-10-8-20-6-32 1-8 3-14 2-21z" fill="#8b3335" />
    <path d="M1564 0h188c2 8 3 20-1 28-3 7-9 11-15 13 7 1 11-3 18-5 4-1 9-2 11 1 2 4-4 11-10 15-16 10-44 8-60 5-26-6-50-12-75-12-22 0-38 1-54 11-2-12 4-22 13-26-12-4-16-12-15-30z" fill="#8b3335" />
    <path d="M1842 63c1-3 3-5 4-7-6-4-5-12-2-17 5-9 17-9 22-1 2 3 2 4 6 4 6-1 12-2 18-1 6 1 8 6 7 12-1 6-5 9-9 10-12 1-22-4-32-3-6 0-10 1-14 3z" fill="#8b3335" />
  </Art>
);

const TopBar = () => (
  <Header>
    <TopArt />
    <TitleBar>
      <QuickAccess>
        {Icons.save}
        <Space $w={18} />{Icons.undo}<Caret $c="#ba5b5e" $ml={6} />
        <Space $w={12} />{Icons.redo}<Caret $c="#ba5b5e" $ml={7} />
        <Space $w={17} />{Icons.custom}
      </QuickAccess>
      <Title>Бакылау_жумыс_Айша 3_кредит[1] : база данных- C:\Users\USER\Documents\Бакылау_жумыс_Айша 3_кредит[1].accdb (Формат файлов Access 2007–2016)&nbsp; -&nbsp; Access</Title>
      <User>Серікбай Айша (30622)</User>
      <Avatar>СА</Avatar>
      <Controls>
        <Svg w={13} h={13}><path d="M0 6.500h13" stroke="#fff" strokeWidth="1.3" /></Svg>
        <Svg w={13} h={13}><path d="M.6 3.600h9v9h-9zM3.600 3V.6h9v9h-2.500" stroke="#fff" strokeWidth="1.3" /></Svg>
        <Svg w={13} h={13}><path d="m.5.5 12 12M12.500.5l-12 12" stroke="#fff" strokeWidth="1.3" /></Svg>
      </Controls>
    </TitleBar>
    <MenuTabs>
      <MenuTab $w={76} $pad={19}>Файл</MenuTab>
      <MenuTab $w={81} $pad={12} $active>Главная</MenuTab>
      <MenuTab $w={108} $pad={14}>Создание</MenuTab>
      <MenuTab $w={148} $pad={0}>Внешние данные</MenuTab>
      <MenuTab $w={198} $pad={0}>Работа с базами данных</MenuTab>
      <MenuTab $w={91} $pad={0}>Справка</MenuTab>
      <Tell $w={260} $pad={0} $ls={-0.45}>{Icons.bulb}Что вы хотите сделать?</Tell>
    </MenuTabs>
  </Header>
);

const RibbonBar = () => (
  <Ribbon>
    <Group $w={72}>
      <GroupBody $pad={6}>
        <Big $w={60}><BigIcon>{Icons.mode}</BigIcon><BigLine>Режим</BigLine><BigLine><Caret $ml={0} /></BigLine></Big>
      </GroupBody>
      <GroupFoot $pad={11}>Режимы</GroupFoot>
    </Group>
    <Group $w={261}>
      <GroupBody $pad={10}>
        <Big $w={66} $off><BigIcon>{Icons.paste}</BigIcon><BigLine>Вставить</BigLine><BigLine><Caret $off $ml={0} /></BigLine></Big>
        <Column $w={170} $ml={5}>
          <Command off icon={Icons.cut} text="Вырезать" />
          <Command off icon={Icons.copy} text="Копировать" />
          <Command off icon={Icons.brush} text="Формат по образцу" ls={-0.3} />
        </Column>
      </GroupBody>
      <GroupFoot $pad={76}>Буфер обмена<Launcher>{Icons.launch("#666")}</Launcher></GroupFoot>
    </Group>
    <Group $w={411}>
      <GroupBody $pad={7}>
        <Big $w={60} $off><BigIcon><Funnel /></BigIcon><BigLine>Фильтр</BigLine></Big>
        <Column $w={175} $ml={5}>
          <Command off icon={<SortIcon a="А" b="Я" />} iw={22} text="По возрастанию" />
          <Command off icon={<SortIcon a="Я" b="А" />} iw={22} text="По убыванию" />
          <Command off icon={<><SortLetters><span>А</span><span>Я</span></SortLetters>{Icons.eraser}</>} iw={22} text="Удалить сортировку" ls={-0.42} />
        </Column>
        <Column $w={150} $ml={1}>
          <Command off icon={Icons.selFilter} text="Выделение" caret gap={3} />
          <Command icon={Icons.moreFilter} text="Дополнительно" caret />
          <Command off icon={<Funnel s={18} />} text="Фильтр" />
        </Column>
      </GroupBody>
      <GroupFoot $pad={139}>Сортировка и фильтр</GroupFoot>
    </Group>
    <Group $w={363}>
      <GroupBody $pad={8}>
        <Big $w={77}><BigIcon>{Icons.refresh}</BigIcon><BigLine>Обновить</BigLine><BigLine>все<Caret $ml={0} /></BigLine></Big>
        <Column $w={110} $ml={4}>
          <Command off icon={Icons.create} text="Создать" />
          <Command off icon={Icons.keep} text="Сохранить" ls={-0.45} />
          <Command off icon={Icons.del} text="Удалить" caret gap={13} />
        </Column>
        <Column $w={150}>
          <Command off icon={<Inset>{Icons.sum}</Inset>} iw={25} text="Итоги" />
          <Command off icon={<Stack><Tiny>ABC</Tiny>{Icons.check}</Stack>} iw={25} text="Орфография" ls={-0.45} />
          <Command off icon={Icons.moreRec} iw={25} text="Дополнительно" caret ls={-0.42} />
        </Column>
      </GroupBody>
      <GroupFoot $pad={160}>Записи</GroupFoot>
    </Group>
    <Group $w={179}>
      <GroupBody $pad={7}>
        <Big $w={57}><BigIcon>{Icons.find}</BigIcon><BigLine>Найти</BigLine></Big>
        <Column $w={110} $ml={2}>
          <Command off icon={<Stack><Tiny $s={11}>ab</Tiny><Slot $w={20}>{Icons.hook}<Tiny $s={11}>ac</Tiny></Slot></Stack>} iw={24} text="Заменить" ls={-0.45} />
          <Command icon={<Inset>{Icons.go}</Inset>} iw={24} text="Перейти" caret />
          <Command icon={<Inset>{Icons.pointer}</Inset>} iw={24} text="Выбрать" caret />
        </Column>
      </GroupBody>
      <GroupFoot $pad={70}>Найти</GroupFoot>
    </Group>
    <Group $w={489}>
      <GroupBody $pad={0}>
        <FormatArea>
          <FormatRow $h={44}>
            <Combo $w={209}>{Icons.comboArrow}</Combo>
            <Combo $w={88}>{Icons.comboArrow}</Combo>
            <Space $w={6} />
            <Slot $w={27}>{Icons.bullets}</Slot>
            <Slot $w={28}>{Icons.numbers}</Slot>
            <Rule $mr={9} />
            <Slot $w={28}>{Icons.indent}</Slot>
            <Slot $w={27}>{Icons.outdent}</Slot>
            <Rule $mr={10} />
            {Icons.para}<Caret $off $ml={11} />
          </FormatRow>
          <FormatRow $h={34}>
            <Space $w={6} />
            <Slot $w={30}><Glyph>Ж</Glyph></Slot>
            <Slot $w={29}><Glyph $italic>К</Glyph></Slot>
            <Slot $w={23}><Glyph $line $light>Ч</Glyph></Slot>
            <Rule $mr={12} />
            <Slot $w={40}><Glyph $light $s={19} $up={3}>А</Glyph><Caret $off $ml={11} /></Slot>
            <Slot $w={46}>{Icons.marker}<Caret $off $ml={8} /></Slot>
            <Slot $w={39}>{Icons.bucket}<Caret $off $ml={8} /></Slot>
            <Rule $mr={10} />
            <Slot $w={28}>{Icons.left}</Slot>
            <Slot $w={29}>{Icons.center}</Slot>
            <Slot $w={25}>{Icons.right}</Slot>
            <Rule $mr={9} />
            <Slot $w={41}>{Icons.gridlines}<Caret $off $ml={7} /></Slot>
            <Rule $mr={8} />
            {Icons.altRow}<Caret $off $ml={8} />
          </FormatRow>
        </FormatArea>
      </GroupBody>
      <GroupFoot $pad={161}>Форматирование текста<Launcher>{Icons.launch("#b5b5b5")}</Launcher></GroupFoot>
    </Group>
    <Collapse><Svg w={13} h={8}><path d="m.7 7 5.800-6 5.800 6" stroke="#444" strokeWidth="1.3" /></Svg></Collapse>
  </Ribbon>
);

const Navigation = () => (
  <NavPane>
    <NavTitle>
      Все объекты Access
      <NavButtons>
        <Svg w={16} h={16}><circle cx="8" cy="8" r="7.300" stroke="#444" strokeWidth="1.2" /><path d="M4 6h8L8 10.500z" fill="#444" /></Svg>
        <DoubleChevron left />
      </NavButtons>
    </NavTitle>
    <Search>
      Поиск...
      <SearchButton><Svg w={19} h={19}><circle cx="11.500" cy="7" r="6" stroke="#3e75b3" strokeWidth="1.7" /><path d="m7 11.500-6 6" stroke="#3e75b3" strokeWidth="2.2" /></Svg></SearchButton>
    </Search>
    {nav.map(([head, kind, items]) => (
      <React.Fragment key={head}>
        <NavHead>{head}<DoubleChevron /></NavHead>
        {items.map((t) => (
          <NavItem key={t} $active={head === "Отчеты" && t === "Регистратура"} $ls={t === "Switchboard Items" ? -0.28 : undefined}>
            <NavIcon>{navIcons[kind]}</NavIcon>{t}
          </NavItem>
        ))}
      </React.Fragment>
    ))}
  </NavPane>
);

const Document = () => (
  <Content>
    <TabStrip>
      {docTabs.map(([kind, text, w], i) => {
        const active = i === docTabs.length - 1;
        return (
          <DocTab key={i} $w={w} $active={active}>
            <TabShape width={w} height="30">
              <path d={tabPath(w, i === 0 || active)} stroke="#868c94" fill={active ? "#fff" : "none"} />
            </TabShape>
            <TabIcon>{tabIcons[kind]}</TabIcon>
            <TabText>{text}</TabText>
          </DocTab>
        );
      })}
      <CloseDoc><Svg w={10} h={10}><path d="m.7.7 8.600 8.600M9.300.7.7 9.300" stroke="#333" strokeWidth="1.8" /></Svg></CloseDoc>
    </TabStrip>
    <Canvas>
      <Page>
        <Band>Регистратура</Band>
        <HeadRow><Num>Код врача</Num><Name>Пацинент</Name><span>Узкий специалист</span></HeadRow>
        {rows.map(([name, spec, ls], i) => (
          <Row key={i} $alt={i % 2 === 1}><Num>{i + 1}</Num><Name $ls={ls}>{name}</Name><span>{spec}</span></Row>
        ))}
        <Foot $ls={-0.1}><span>вторник, 22 апрель 2025 г.</span><span>Стр. 1 из 1</span></Foot>
      </Page>
    </Canvas>
  </Content>
);

const StatusBar = () => (
  <Status>
    <StatusText>Режим отчета</StatusText>
    <NumLock>Num Lock</NumLock>
    <ViewButton $active><Svg w={17} h={17}><path d="M3.500.6h12v15.500h-12z" stroke="#666" strokeWidth="1.2" /><path d="M0 5h5M0 11h5" stroke="#666" strokeWidth="2.2" /></Svg></ViewButton>
    <ViewButton><Svg w={18} h={16}><path d="M.6.6h14.500v7M.6 0v13.400H9" stroke="#666" strokeWidth="1.2" /><path d="M0 0h15.500v3.500H0z" fill="#666" /><circle cx="12.500" cy="10.500" r="2.800" stroke="#666" fill="#fff" strokeWidth="1.2" /><path d="m14.500 12.500 3 3" stroke="#666" strokeWidth="1.8" /></Svg></ViewButton>
    <ViewButton><Svg w={14} h={16}><path d="M0 .5h14M0 14.500h14M1.500 0v15M12.500 0v15M2 5h3M2 10h3M2 7.500h10" stroke="#666" /><path d="M5 4.500h5M5 10.500h5" stroke="#666" strokeWidth="1.6" /></Svg></ViewButton>
    <ViewButton><Svg w={18} h={17}><path d="M1 0v10.500h5M1 1l8 9.500" stroke="#666" strokeWidth="1.3" /><path d="m7 9 1-3 7-6 2 2-7 6z" fill="#666" /><path d="M1.500 11.600h15.500v4.400H1.500zM5 12v2M8 12v2M11 12v2M14 12v2" stroke="#666" strokeWidth="1.2" /></Svg></ViewButton>
  </Status>
);

const TaskBar = () => (
  <Taskbar>
    <Apps>
      <AppButton>
        <Svg w={30} h={31}>
          <defs><linearGradient id="win" x1="0" y1="0" x2="1" y2="1"><stop offset="0" stopColor="#54cdfb" /><stop offset="1" stopColor="#0b6fd0" /></linearGradient></defs>
          <path d="M1 2h13.500v14H1zM15.800 2h13.700v14H15.800zM1 17.300h13.500v13.700H1zM15.800 17.300h13.700v13.700H15.800z" fill="url(#win)" />
        </Svg>
      </AppButton>
      <AppButton><Svg w={28} h={31}><circle cx="12" cy="13" r="10.500" fill="#dfe2ec" stroke="#2a2a2a" strokeWidth="2.6" /><path d="m19.500 21 7 7.500" stroke="#2a2a2a" strokeWidth="3.4" strokeLinecap="round" /></Svg></AppButton>
      <AppButton><Svg w={30} h={31}><rect y="9" width="23" height="22" rx="1.5" fill="#2b2b2b" /><rect x="7.500" y="1" width="22" height="21.500" rx="1.5" fill="#f7f7f7" /><path d="M7.500 9H23v13.500H7.500z" fill="#bdbdbd" /></Svg></AppButton>
      <AppButton>
        <Svg w={30} h={31}>
          <defs><linearGradient id="fold" x1="0" y1="0" x2="1" y2="1"><stop offset="0" stopColor="#ffd968" /><stop offset="1" stopColor="#fbb80f" /></linearGradient></defs>
          <path d="M0 3.500Q0 2 1.500 2H9l3 3v5H0z" fill="#e0a106" /><path d="M0 8l10-.3L13 5h15.500Q30 5 30 6.500V30H1.500Q0 30 0 28.500z" fill="url(#fold)" />
          <path d="M5 30v-5q0-3.500 3.500-3.500h12q3.500 0 3.500 3.500v5z" fill="#0b6cc4" /><path d="M8.500 25.500h12.500" stroke="#08498e" strokeWidth="1.5" />
        </Svg><Dot />
      </AppButton>
      <AppButton>
        <Svg w={31} h={32}>
          <defs><linearGradient id="edge" x1="0" y1="0" x2="1" y2=".3"><stop offset="0" stopColor="#2b8fdc" /><stop offset=".5" stopColor="#2fc1c9" /><stop offset="1" stopColor="#5bdc62" /></linearGradient></defs>
          <path d="M0 16C0 7 7 1 15.500 1S31 7 31 15c0 5-4 8-8.500 8-3 0-5-1-4-3 2-3 0-7-5-7-7 0-10 5-9 11C1 22 0 19 0 16z" fill="url(#edge)" />
          <path d="M0 14c2-6 9-8 14-5 3 2 4 4 4 5-4-2-7 1-7 5 0 7 6 10 18 7-5 6-14 7-20 4C3 27 0 21 0 14z" fill="#1673c4" />
          <path d="M16 17c-2 6 4 11 12 9-3 4-9 6-13 5z" fill="#0d4d99" />
          <path d="M0 22h15.500v9.500H0z" fill="#b2690f" /><path d="M4.500 22v-2h6.500v2M0 26h15.500" stroke="#7a4408" strokeWidth="1.5" /><path d="M7 25.500h2v2.500H7z" fill="#ffd35a" />
        </Svg><Dot />
      </AppButton>
      <AppButton>
        <Svg w={30} h={31}>
          <defs><linearGradient id="store" x1="0" y1="0" x2="1" y2="1"><stop offset="0" stopColor="#0c67b5" /><stop offset="1" stopColor="#2a2f57" /></linearGradient></defs>
          <path d="M8.500 6V2h13v4" stroke="#3ab8f3" strokeWidth="2" /><path d="M.5 5h29v22.500q0 3.500-3.500 3.500H4Q.5 31 .5 27.500z" fill="url(#store)" />
          <path d="M9.500 12.500h5v5h-5z" fill="#f25022" /><path d="M15.500 12.500h5v5h-5z" fill="#7fba00" /><path d="M9.500 18.500h5v5h-5z" fill="#00a4ef" /><path d="M15.500 18.500h5v5h-5z" fill="#ffb900" />
        </Svg>
      </AppButton>
      <AppButton>
        <Svg w={23} h={32}>
          <defs><linearGradient id="note" x1="0" y1="0" x2="0" y2="1"><stop offset="0" stopColor="#6cd4ea" /><stop offset="1" stopColor="#3fb3d6" /></linearGradient></defs>
          <path d="M.5 3h22v25H.5z" fill="url(#note)" /><path d="M1 28.200h21" stroke="#f0f0f0" strokeWidth="1.5" /><path d="M.5 30.300h22" stroke="#8c4a1b" strokeWidth="2" />
          <path d="M4 10.500h14M4 16h14M4 21.500h14" stroke="#0e6a8c" strokeWidth="1.8" /><path d="M3.500 1v4M7.500 1v4M11.500 1v4M15.500 1v4M19.500 1v4" stroke="#0e5a7c" strokeWidth="2" />
        </Svg><Dot />
      </AppButton>
      <AppButton>
        <Svg w={31} h={32}>
          <path d="M2 30.500 3.600 23A13.500 14 0 1 1 9 28.500z" fill="#eef1f5" stroke="#1b8c4f" strokeWidth="2.7" />
          <path d="M9.500 9.500c1-1.500 3-1.500 3.500 0l1 2.500c0 1-1.500 1.500-1.300 2.500 1 2 2.500 3.500 4.800 4.500 1 .3 1.600-1.700 2.800-1.300l2.500 1.300c1 1-.3 3.500-2 4-6 1.500-13-6-11.300-13.500z" fill="#1b8c4f" />
        </Svg><Dot /><Badge>1</Badge>
      </AppButton>
      <AppButton>
        <Tile $x={4} $y={5} $w={48} $h={49} $c="#eceef6" />
        <Lift><Svg w={30} h={32}>
          <path d="M7 6v20c0 7 22.500 7 22.500 0V6z" fill="#b0182e" /><path d="M7 20v6c0 7 22.500 7 22.500 0v-6c0 5-22.500 5-22.500 0z" fill="#861422" /><path d="M7 7v6c0 5 22.500 5 22.500 0V7z" fill="#c83a50" /><ellipse cx="18.200" cy="6" rx="11.300" ry="4.500" fill="#dd6f84" />
          <rect y="8" width="15.500" height="16" rx="1" fill="#a3102a" /><text x="7.700" y="21" fill="#fff" fontFamily={UI} fontWeight="700" fontSize="13" textAnchor="middle">A</text>
        </Svg></Lift><Dot $w={20} $c="#a9bfcb" />
      </AppButton>
      <AppButton>
        <Tile $x={10} $y={4} $w={44} $h={55 - 5} $c="#e9acab" />
        <Tile $x={4} $y={4} $w={44} $h={50} $c="#e9acab" $edge />
        <Lift><Svg w={30} h={32}>
          <defs><linearGradient id="ya" gradientUnits="userSpaceOnUse" x1="5" x2="24" y1="9" y2="9"><stop offset="0" stopColor="#ff7a1a" /><stop offset=".5" stopColor="#f03322" /><stop offset="1" stopColor="#f45cf0" /></linearGradient></defs>
          <circle cx="15" cy="17" r="15" fill="#fff" /><path d="m7 10 8 9 8-9" stroke="url(#ya)" strokeWidth="4" strokeLinejoin="round" /><path d="M15 18v11" stroke="#e8362a" strokeWidth="4" />
        </Svg></Lift><Dot $c="#c42b1c" />
      </AppButton>
    </Apps>
    <Tray>
      <Svg w={15} h={9}><path d="m1.500 7.500 6-6 6 6" stroke="#1b1b1f" strokeWidth="1.7" /></Svg>
      <Lang>ҚАЗ</Lang>
      <Svg w={20} h={16}><path d="M1 6c5-6 13-6 18 0M4 9c3.500-4 8.500-4 12 0M6.800 12c2-2.200 4.400-2.200 6.400 0" stroke="#1b1b1f" strokeWidth="1.5" /><circle cx="10" cy="14" r="1.8" fill="#1b1b1f" /></Svg>
      <Space $w={10} />
      <Svg w={21} h={16}><path d="M1 5.500h3.500L9 1.500v13l-4.500-4H1z" stroke="#1b1b1f" strokeWidth="1.4" /><path d="M11.500 5.500c1.500 1.500 1.500 3.500 0 5" stroke="#1b1b1f" strokeWidth="1.3" /><path d="M14.500 3c3 3 3 7 0 10M17 .5c4.500 4.500 4.500 10.500 0 15" stroke="#a4a9b5" strokeWidth="1.3" /></Svg>
      <Space $w={10} />
      <Svg w={20} h={16}><path d="M9 2.700h6.500q2 0 2 2v7.500q0 2-2 2H3q-2 0-2-2V9" stroke="#1b1b1f" strokeWidth="1.5" /><path d="M18 6.500q2 0 2 2t-2 2z" fill="#1b1b1f" /><path d="M4 0 0 6.500h3L2 10l5-6H4.500zM3 12.500V10l4-3v5.500z" fill="#1b1b1f" /></Svg>
      <Clock>14:38<br />22.04.2025</Clock>
      <Space $w={11} />
      <Svg w={18} h={20}><path d="M0 16.500 2 14V8c0-9 14-9 14 0v6l2 2.500zM6 17.500h6c0 3-6 3-6 0z" fill="#8faabb" /></Svg>
    </Tray>
  </Taskbar>
);

export default function App() {
  return (
    <Window>
      <Global />
      <TopBar />
      <RibbonBar />
      <Workspace>
        <Navigation />
        <Splitter />
        <Document />
      </Workspace>
      <StatusBar />
      <TaskBar />
    </Window>
  );
}
